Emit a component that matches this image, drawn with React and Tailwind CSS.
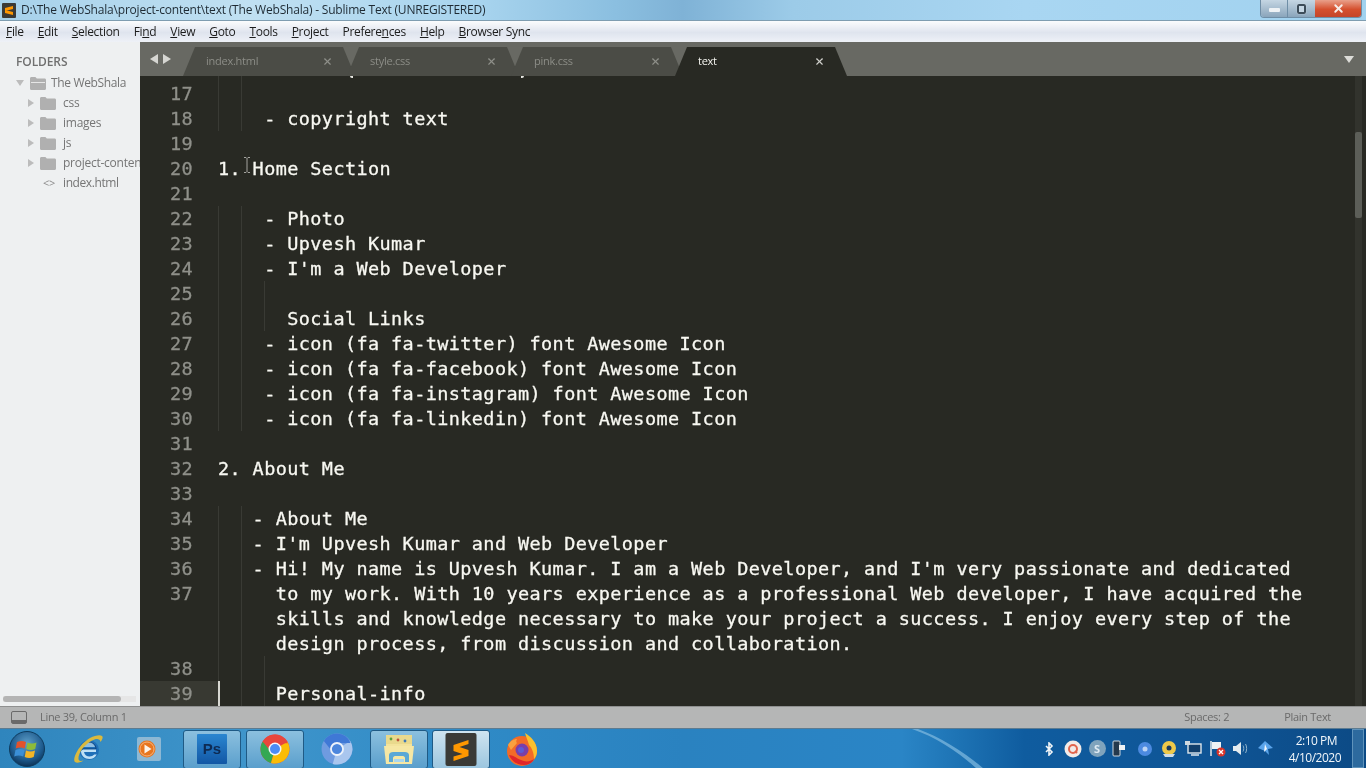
import { X } from 'lucide-react';

const menu = ['File', 'Edit', 'Selection', 'Find', 'View', 'Goto', 'Tools', 'Project', 'Preferences', 'Help', 'Browser Sync'];
const underlined = ['F', 'E', 'S', 'n', 'V', 'G', 'T', 'P', 'n', 'H', 'B'];

const tabs = [
  { name: 'index.html' },
  { name: 'style.css' },
  { name: 'pink.css' },
  { name: 'text', active: true },
];

const folders = ['css', 'images', 'js', 'project-content'];

const rows = [
  { n: 17, text: '', guides: [0, 2] },
  { n: 18, text: '    - copyright text', guides: [0, 2] },
  { n: 19, text: '', guides: [] },
  { n: 20, text: '1. Home Section', guides: [] },
  { n: 21, text: '', guides: [] },
  { n: 22, text: '    - Photo', guides: [0, 2] },
  { n: 23, text: '    - Upvesh Kumar', guides: [0, 2] },
  { n: 24, text: "    - I'm a Web Developer", guides: [0, 2] },
  { n: 25, text: '', guides: [0, 2, 4] },
  { n: 26, text: '      Social Links', guides: [0, 2, 4] },
  { n: 27, text: '    - icon (fa fa-twitter) font Awesome Icon', guides: [0, 2] },
  { n: 28, text: '    - icon (fa fa-facebook) font Awesome Icon', guides: [0, 2] },
  { n: 29, text: '    - icon (fa fa-instagram) font Awesome Icon', guides: [0, 2] },
  { n: 30, text: '    - icon (fa fa-linkedin) font Awesome Icon', guides: [0, 2] },
  { n: 31, text: '', guides: [] },
  { n: 32, text: '2. About Me', guides: [] },
  { n: 33, text: '', guides: [] },
  { n: 34, text: '   - About Me', guides: [0, 2] },
  { n: 35, text: "   - I'm Upvesh Kumar and Web Developer", guides: [0, 2] },
  { n: 36, text: "   - Hi! My name is Upvesh Kumar. I am a Web Developer, and I'm very passionate and dedicated", guides: [0, 2] },
  { n: 37, text: '     to my work. With 10 years experience as a professional Web developer, I have acquired the', guides: [0, 2] },
  { text: '     skills and knowledge necessary to make your project a success. I enjoy every step of the', guides: [0, 2] },
  { text: '     design process, from discussion and collaboration.', guides: [0, 2] },
  { n: 38, text: '', guides: [0, 2, 4] },
  { n: 39, text: '     Personal-info', guides: [2, 4], current: true },
];

const guideClass = {
  0: 'left-0',
  2: 'left-[23px]',
  4: 'left-[46px]',
};

function FolderIcon({ open }) {
  return (
    <svg width="16" height="13" viewBox="0 0 16 13" className="shrink-0">
      <path d="M0 1.5C0 .7.6 0 1.4 0h4l1.4 1.6h7.8c.8 0 1.4.6 1.4 1.4v8.5c0 .8-.6 1.5-1.4 1.5H1.4C.6 13 0 12.3 0 11.5z" fill="#b0b0b0" />
      {open && <path d="M1 5h14v1H1z" fill="#e6e6e6" />}
    </svg>
  );
}

function TriRight() {
  return <div className="w-0 h-0 border-y-[4px] border-y-transparent border-l-[6px] border-l-[#bcbcbc] shrink-0" />;
}

function Sidebar() {
  return (
    <div className="w-[140px] shrink-0 bg-[#eef0f1] flex flex-col relative overflow-hidden [font-family:'Open_Sans',sans-serif]">
      <div className="pl-4 pt-[12px] h-[31px] text-[12px] font-semibold leading-[16px] text-[#707070] tracking-[-0.1px]">FOLDERS</div>
      <div className="flex items-center h-5 pl-[16px] gap-[4px] text-[12px] text-[#757575] tracking-[-0.35px]">
        <div className="w-0 h-0 border-x-[4px] border-x-transparent border-t-[6px] border-t-[#bcbcbc] shrink-0" />
        <span className="ml-[2px]"><FolderIcon open /></span>
        <span className="ml-[1px] whitespace-nowrap">The WebShala</span>
      </div>
      {folders.map((f) => (
        <div key={f} className="flex items-center h-5 pl-[28px] text-[12px] text-[#757575] tracking-[-0.25px] whitespace-nowrap">
          <TriRight />
          <span className="ml-[6px]"><FolderIcon /></span>
          <span className="ml-[7px]">{f}</span>
        </div>
      ))}
      <div className="flex items-center h-5 pl-[43px] text-[12px] text-[#757575] tracking-[-0.4px]">
        <span className="text-[11px] text-[#8b8b8b] w-[20px]">&lt;&gt;</span>
        <span>index.html</span>
      </div>
      <div className="mt-auto mb-[4px] ml-[3px] mr-[4px] h-[6px] bg-[#e6e6e6] flex">
        <div className="w-[118px] h-full bg-[#b4b4b4] rounded-full" />
      </div>
    </div>
  );
}

function TabBar() {
  return (
    <div className="h-[34px] shrink-0 bg-[#686963] flex relative">
      <div className="w-[43px] shrink-0 flex items-center gap-[5px] pl-[10px]">
        <div className="w-0 h-0 border-y-[5px] border-y-transparent border-r-[8px] border-r-[#d6d6d2]" />
        <div className="w-0 h-0 border-y-[5px] border-y-transparent border-l-[8px] border-l-[#d6d6d2]" />
      </div>
      <div className="flex mt-[5px]">
        {tabs.map((t) => (
          <div key={t.name} className={`relative w-[164px] h-[29px] ${t.active ? 'z-10' : ''}`}>
            {/* the tab's shape is wider than its slot, the slopes overlap */}
            <div className={`absolute left-0 top-0 w-[172px] h-full [clip-path:polygon(12px_0,160px_0,172px_100%,0_100%)] ${t.active ? 'bg-[#282923]' : 'bg-[#4b4c46]'}`} />
            <div className={`relative h-full flex items-center justify-between pl-[23px] pr-[14px] text-[11px] tracking-[-0.25px] [font-family:'Open_Sans',sans-serif] ${t.active ? 'text-[#f4f4ef]' : 'text-[#8c8d87]'}`}>
              <span>{t.name}</span>
              <X size={11} strokeWidth={2.5} className={t.active ? 'text-[#d0d0cc]' : 'text-[#8f908a]'} />
            </div>
          </div>
        ))}
      </div>
      <div className="absolute right-[12px] top-[14px] w-0 h-0 border-x-[5px] border-x-transparent border-t-[7px] border-t-[#dcdcd8]" />
    </div>
  );
}

function CodeRow({ row }) {
  return (
    <div className="flex h-[25px] leading-[25px]">
      <div className={`w-[78px] shrink-0 text-right pr-[25px] text-[#8f908a] ${row.current ? 'bg-[#383932]' : ''}`}>{row.n}</div>
      <div className="relative flex-1 whitespace-pre text-[#f8f8f2]">
        {row.guides.map((g) => (
          <span key={g} className={`absolute top-0 bottom-0 w-px bg-[#393a34] ${guideClass[g]}`} />
        ))}
        {row.current && <span className="absolute left-0 top-0 bottom-0 w-[2px] bg-[#d8d8d2]" />}
        {row.text}
      </div>
    </div>
  );
}

function Editor() {
  return (
    <div className="flex-1 bg-[#282923] relative overflow-hidden pt-[5px] [font-family:'DejaVu_Sans_Mono',monospace] text-[18.5px] tracking-[0.4px] [-webkit-text-stroke:0.3px]">
      {/* the line above is scrolled away, only its bracket tails still show */}
      <span className="absolute left-[210px] top-0 w-[3px] h-[2px] rounded-bl-[2px] bg-[#e8e8e2]" />
      <span className="absolute left-[381px] top-0 w-[3px] h-[2px] rounded-br-[2px] bg-[#e8e8e2]" />
      <span className="absolute left-[78px] top-0 h-[5px] w-px bg-[#393a34]" />
      <span className="absolute left-[101px] top-0 h-[5px] w-px bg-[#393a34]" />
      {rows.map((row, i) => (
        <CodeRow key={i} row={row} />
      ))}
      {/* mouse text cursor over line 20 */}
      <svg width="8" height="16" viewBox="0 0 8 16" className="absolute left-[103px] top-[81px]">
        <path d="M1 .5h2l1 1 1-1h2M4 1.5v13M1 15.5h2l1-1 1 1h2" stroke="#a5a5a0" fill="none" />
      </svg>
      {/* scrollbar */}
      <div className="absolute right-[4px] top-0 bottom-0 w-[7px] bg-[#32332d]">
        <div className="mt-[56px] h-[86px] bg-[#5c5e58] rounded-[2px]" />
      </div>
    </div>
  );
}

function WindowButtons() {
  return (
    <div className="absolute top-0 right-[4px] h-[18px] flex border border-t-0 border-[#6f8ea6] rounded-b-[4px] overflow-hidden">
      <div className="w-[27px] bg-[linear-gradient(#c5d6e3,#8aa5bb)] border-r border-[#6f8ea6] flex items-center justify-center">
        <div className="w-[11px] h-[4px] mt-[3px] bg-[#eef2f5] rounded-[1px]" />
      </div>
      <div className="w-[27px] bg-[linear-gradient(#c5d6e3,#8aa5bb)] flex items-center justify-center">
        <div className="w-[9px] h-[10px] border-2 border-[#3c4c59] bg-[#c5d6e3] rounded-[2px] shadow-[0_0_1px_#fff]" />
      </div>
      <div className="w-[46px] bg-[linear-gradient(#e9a08a,#d5502e_55%,#c4452a)] flex items-center justify-center">
        <X size={13} strokeWidth={3.5} className="text-[#f6ece8]" />
      </div>
    </div>
  );
}

function TaskButton({ left, active, children }) {
  return (
    <div className={`w-[58px] h-[39px] mt-[1px] ${left} shrink-0 flex items-center justify-center rounded-[3px] border border-[#1f5a85] ${active ? 'bg-[linear-gradient(#cfe4f0,#9cc6df)]' : 'bg-[linear-gradient(#8cc0df,#5a9fcc)]'}`}>
      {children}
    </div>
  );
}

function StartOrb() {
  return (
    <svg width="36" height="36" viewBox="0 0 36 36">
      <defs>
        <radialGradient id="orb" cx="50%" cy="35%" r="65%">
          <stop offset="0%" stopColor="#5f9fc9" />
          <stop offset="70%" stopColor="#1d5a8d" />
          <stop offset="100%" stopColor="#0d3357" />
        </radialGradient>
      </defs>
      <circle cx="18" cy="18" r="17.5" fill="url(#orb)" stroke="#0e3b5e" />
      <path d="M8 11c3-1.5 6-1.5 9 0l-1.3 6.5c-3-1.2-6-1.2-9 0z" fill="#e2522b" />
      <path d="M18.5 11.500c3 1.300 6 1.300 9 0l-1.300 6.500c-3 1.200-6 1.200-9 0z" fill="#8dbb3a" />
      <path d="M6.500 19c3-1.200 6-1.200 9 0l-1.300 6.500c-3-1.200-6-1.200-9 0z" fill="#3b8fd6" />
      <path d="M17 19.500c3 1.200 6 1.200 9 0l-1.300 6.500c-3 1.200-6 1.200-9 0z" fill="#f3b526" />
    </svg>
  );
}

function IeIcon() {
  return (
    <svg width="36" height="36" viewBox="0 0 36 36">
      <circle cx="19" cy="19" r="10" fill="#1f6fb8" />
      <path d="M11 18h15c0-4-3-6.500-7-6.500" fill="none" stroke="#0c3f78" strokeWidth="1" />
      <path d="M13 18.500h13v2.500H14c.5 3 3 4.500 5.500 4.500 2 0 3.500-.8 4.800-2h2.400c-1.500 3-4.200 4.500-7.200 4.500-5 0-8.500-3.500-8.500-8" fill="#bfe0f5" />
      <path d="M14 14.500c1.200-2 3-3 5-3 3 0 5.500 2 6 4.500H14z" fill="#bfe0f5" opacity=".7" />
      <path d="M5 31C2 28 9 13 20 7c5-2.500 10-3.500 12-2 1.500 1.500 0 4-1.500 6-.5-3-3-3.500-6-2.500C15 12 8 22 8.500 28c.2 2 2 2.500 5 1.500-3 2-6.500 3-8.500 1.500z" fill="#d9b93f" />
    </svg>
  );
}

function MediaIcon() {
  return (
    <svg width="28" height="26" viewBox="0 0 28 26">
      <rect x="2" y="1" width="24" height="24" rx="2" fill="#8db8d4" />
      <circle cx="12" cy="13" r="8.500" fill="#e8761f" />
      <circle cx="12" cy="13" r="7" fill="none" stroke="#f6b37c" strokeWidth="1" />
      <path d="M9.500 8.500l7 4.500-7 4.500z" fill="#fdf4ea" />
    </svg>
  );
}

function ChromeIcon({ size = 30 }) {
  return (
    <svg width={size} height={size} viewBox="0 0 30 30">
      <circle cx="15" cy="15" r="14.500" fill="#e8453c" />
      <path d="M15 15L2.500 7.700A14.500 14.500 0 0 0 11 29z" fill="#34a853" />
      <path d="M15 15l-4 14A14.500 14.500 0 0 0 27.500 7.700z" fill="#fbbc05" />
      <path d="M15 9.300h12.700l-.6-1.600A14.500 14.500 0 0 0 15 .5 14.500 14.500 0 0 0 2.700 7.500l6 7.500A6 6 0 0 1 15 9.300z" fill="#e8453c" />
      <circle cx="15" cy="15" r="6.500" fill="#f3f6fa" />
      <circle cx="15" cy="15" r="5" fill="#4c8bf5" />
    </svg>
  );
}

function ChromiumIcon() {
  return (
    <svg width="32" height="32" viewBox="0 0 30 30">
      <circle cx="15" cy="15" r="14.500" fill="#6f9be0" />
      <path d="M15 15l-4 14A14.500 14.500 0 0 0 27.500 7.700z" fill="#a9c6ee" />
      <path d="M15 9.300h12.700A14.500 14.500 0 0 0 15 .5 14.500 14.500 0 0 0 2.700 7.500l6 7.500A6 6 0 0 1 15 9.300z" fill="#3f78d6" />
      <circle cx="15" cy="15" r="6.500" fill="#eef3fb" />
      <circle cx="15" cy="15" r="4.800" fill="#4c86dd" />
    </svg>
  );
}

function ExplorerIcon() {
  return (
    <svg width="34" height="34" viewBox="0 0 34 34">
      <rect x="4" y="3" width="26" height="28" rx="1" fill="#f3e39c" />
      <rect x="4" y="3" width="26" height="9" fill="#e9d98d" />
      <circle cx="9" cy="7" r="1.400" fill="#5fa03a" />
      <circle cx="16" cy="8" r="1.400" fill="#c0513a" />
      <circle cx="23" cy="9" r="1.400" fill="#3f78b6" />
      <path d="M2 14h30l-2 18H4z" fill="#f6e7a4" />
      <path d="M7 30v-7c0-2 2-3 4-3h12c2 0 4 1 4 3v7h-4v-4c0-1-1-2-2-2h-8c-1 0-2 1-2 2v4z" fill="#5ba8d6" />
      <rect x="12" y="27" width="10" height="3" fill="#a8d6ef" />
    </svg>
  );
}

function SublimeIcon() {
  return (
    <svg width="32" height="33" viewBox="0 0 31 33">
      <rect width="31" height="33" rx="2" fill="#3a3a36" />
      <path d="M23 7 8 12v6l9 3-9 2.500V28l15-5v-6l-9-3 9-3z" fill="#ff9800" />
    </svg>
  );
}

function FirefoxIcon() {
  return (
    <svg width="34" height="36" viewBox="0 0 34 36">
      <circle cx="17" cy="20" r="15" fill="#f26b27" />
      <path d="M20 2c6 4 12 9 12 18 0 3-1 6-3 8 0-6-2-11-5-14-1-4-3-8-4-12z" fill="#fbc02d" />
      <path d="M3 14c2-4 6-6 9-6-1 2-1 3 0 4l-6 7z" fill="#f9a03f" />
      <circle cx="17" cy="19" r="6.500" fill="#7a3fa8" />
      <circle cx="16" cy="19" r="3" fill="#5b5bd6" />
      <path d="M4 24c3 7 9 10 15 10 4 0 8-2 10-6-4 3-9 3-13 1-5-2-8-5-12-5z" fill="#e0262a" />
    </svg>
  );
}

function TrayCell({ children }) {
  return <div className="w-6 shrink-0 flex items-center justify-center">{children}</div>;
}

function Tray() {
  return (
    <div className="flex items-center ml-auto mr-[89px] h-full">
      <TrayCell>
        <svg width="10" height="14" viewBox="0 0 10 14">
          <path d="M2 4l6 6-3 3V1l3 3-6 6" fill="none" stroke="#f1f5f8" strokeWidth="1.600" />
        </svg>
      </TrayCell>
      <TrayCell>
        <svg width="18" height="18" viewBox="0 0 18 18">
          <circle cx="9" cy="9" r="8.500" fill="#f1ebe8" />
          <circle cx="9" cy="9" r="4" fill="none" stroke="#e0654e" strokeWidth="2" />
          <path d="M11 11l2 2" stroke="#e0654e" strokeWidth="2" />
        </svg>
      </TrayCell>
      <TrayCell>
        <div className="w-[17px] h-[17px] rounded-full bg-[#7fa3bc] flex items-center justify-center text-[11px] font-bold text-[#dfeaf2] leading-none [font-family:'Open_Sans',sans-serif]">S</div>
      </TrayCell>
      <TrayCell>
        <svg width="14" height="17" viewBox="0 0 14 17" className="-ml-1">
          <rect x="1" y="1" width="7" height="15" rx="1" fill="#24394d" stroke="#cfd8df" />
          <rect x="7" y="5" width="6" height="5" fill="#eef2f5" />
        </svg>
      </TrayCell>
      <TrayCell>
        <svg width="18" height="18" viewBox="0 0 18 18">
          <circle cx="9" cy="9" r="7" fill="#4c8ae0" />
          <circle cx="9" cy="9" r="2.500" fill="#bcd4f5" />
        </svg>
      </TrayCell>
      <TrayCell>
        <svg width="18" height="18" viewBox="0 0 18 18">
          <circle cx="9" cy="8" r="7" fill="#eec94a" />
          <circle cx="9" cy="8" r="2.500" fill="#1a3a60" />
          <path d="M3 14h12l-2 3H5z" fill="#cfdce6" />
        </svg>
      </TrayCell>
      <TrayCell>
        <svg width="19" height="17" viewBox="0 0 19 17">
          <rect x="4" y="4" width="13" height="9" fill="#123f6b" stroke="#dfe7ec" strokeWidth="1.400" />
          <rect x="1" y="1" width="5" height="4" fill="#cfd8df" />
          <path d="M7 15h8" stroke="#dfe7ec" strokeWidth="1.500" />
        </svg>
      </TrayCell>
      <TrayCell>
        <svg width="17" height="17" viewBox="0 0 17 17">
          <path d="M2 1v15" stroke="#e6ebee" strokeWidth="1.500" />
          <path d="M3 2h9v7H3z" fill="#eef2f5" />
          <circle cx="12" cy="12" r="4.500" fill="#d8342a" />
          <path d="M10 10l4 4M14 10l-4 4" stroke="#fff" strokeWidth="1.300" />
        </svg>
      </TrayCell>
      <TrayCell>
        <svg width="18" height="15" viewBox="0 0 18 15">
          <path d="M1 5h3l5-4v13l-5-4H1z" fill="#e4ebef" />
          <path d="M11 4.500c1 1.500 1 4.500 0 6M13.500 3c1.500 2 1.500 7 0 9" stroke="#8fb3cb" fill="none" />
        </svg>
      </TrayCell>
      <TrayCell>
        <svg width="18" height="17" viewBox="0 0 18 17">
          <path d="M9 1l8 7-5 1 1 6-4-4-7-3z" fill="#5aa4ea" />
          <path d="M9 4l2 5-3 3z" fill="#f4f8fb" />
        </svg>
      </TrayCell>
    </div>
  );
}

function Taskbar() {
  return (
    <div className="h-10 shrink-0 relative flex items-center border-t border-[#5d7b90] overflow-hidden bg-[linear-gradient(90deg,#2f85bd_0%,#3f95cb_18%,#2f8ac6_35%,#2a82c0_50%,#2a85c6_66%,#1e74b5_70%,#0f5c9f_75%,#0f5596_88%,#0c4a85_100%)]">
      <svg className="absolute left-[900px] top-0" width="90" height="40" viewBox="0 0 90 40">
        <path d="M18 0C40 8 66 24 84 40h-7C60 24 36 8 12 0z" fill="#7cb7de" opacity=".75" />
      </svg>
      <div className="relative flex items-center w-full h-full">
        <div className="ml-[9px] w-[36px] shrink-0"><StartOrb /></div>
        <div className="ml-[25px] w-[36px] shrink-0"><IeIcon /></div>
        <div className="ml-[29px] w-[28px] shrink-0"><MediaIcon /></div>
        <TaskButton left="ml-[20px]">
          <div className="w-[30px] h-[30px] bg-[linear-gradient(#2a86d0,#1257a5)] rounded-[1px] flex items-center justify-center text-[15px] font-bold text-[#0e2a52] [font-family:'Liberation_Sans',sans-serif]">Ps</div>
        </TaskButton>
        <TaskButton left="ml-[5px]"><ChromeIcon /></TaskButton>
        <div className="ml-[17px] w-[32px] shrink-0"><ChromiumIcon /></div>
        <TaskButton left="ml-[17px]"><ExplorerIcon /></TaskButton>
        <TaskButton left="ml-[4px]" active><SublimeIcon /></TaskButton>
        <div className="ml-[15px] w-[34px] shrink-0"><FirefoxIcon /></div>
        <Tray />
        <div className="absolute right-[25px] top-[3px] w-[56px] text-[12px] leading-[17px] text-right text-[#f1f6fa] tracking-[-0.5px] [font-family:'Open_Sans',sans-serif]">
          <div className="pr-[4px]">2:10 PM</div>
          <div>4/10/2020</div>
        </div>
        <div className="absolute right-[2px] top-0 bottom-0 w-[12px] bg-[#2d6a9e] border border-[#5f93bb]" />
      </div>
    </div>
  );
}

export default function App() {
  return (
    <div className="w-[1366px] h-[768px] overflow-hidden flex flex-col blur-[0.5px] bg-[#eef0f1]">
      {/* title bar */}
      <div className="h-[21px] shrink-0 relative flex items-center border-b border-[#7f9db0] bg-[linear-gradient(90deg,#a6d1ea_0%,#c0e0f2_18%,#a8d4ee_35%,#8bbfe0_45%,#7fb2d6_50%,#9ccbe8_58%,#a9d6f2_75%,#a1d2ef_100%)]">
        <div className="ml-[2px] w-[14px] h-[15px] bg-[#3a3a36] rounded-[1px] flex items-center justify-center">
          <svg width="10" height="11" viewBox="0 0 10 11">
            <path d="M9 1v3L1 6V3zM1 5l8 2v3L1 8z" fill="#ff9800" />
          </svg>
        </div>
        <span className="ml-[5px] text-[12px] text-[#1e2a33] tracking-[-0.2px] whitespace-nowrap [font-family:'Open_Sans',sans-serif]">
          D:\The WebShala\project-content\text (The WebShala) - Sublime Text (UNREGISTERED)
        </span>
        <WindowButtons />
      </div>
      {/* menu bar */}
      <div className="h-[21px] shrink-0 flex items-center pl-[6px] gap-[14px] bg-[linear-gradient(#fbfcfd,#dfe4ee_55%,#eef1f7)] text-[12px] text-[#1c1c1c] tracking-[-0.32px] [font-family:'Open_Sans',sans-serif]">
        {menu.map((m, i) => {
          const at = m.indexOf(underlined[i]);
          return (
            <span key={m} className="whitespace-nowrap">
              {m.slice(0, at)}
              <span className="underline">{m[at]}</span>
              {m.slice(at + 1)}
            </span>
          );
        })}
      </div>
      {/* main area */}
      <div className="flex-1 flex min-h-0">
        <Sidebar />
        <div className="flex-1 flex flex-col min-w-0">
          <TabBar />
          <Editor />
        </div>
      </div>
      {/* status bar */}
      <div className="h-[22px] shrink-0 bg-[#b5b6b6] border-t border-[#8f9090] flex items-center text-[11px] text-[#6a6a6a] tracking-[-0.3px] [font-family:'Open_Sans',sans-serif]">
        <svg width="16" height="13" viewBox="0 0 16 13" className="ml-[11px]">
          <rect x=".5" y=".5" width="15" height="12" rx="1.500" fill="none" stroke="#6a6a6a" />
          <rect x="1" y="9" width="14" height="3" fill="#6a6a6a" />
        </svg>
        <span className="ml-[13px]">Line 39, Column 1</span>
        <span className="ml-auto">Spaces: 2</span>
        <span className="ml-[55px] mr-[35px]">Plain Text</span>
      </div>
      <Taskbar />
    </div>
  );
}
